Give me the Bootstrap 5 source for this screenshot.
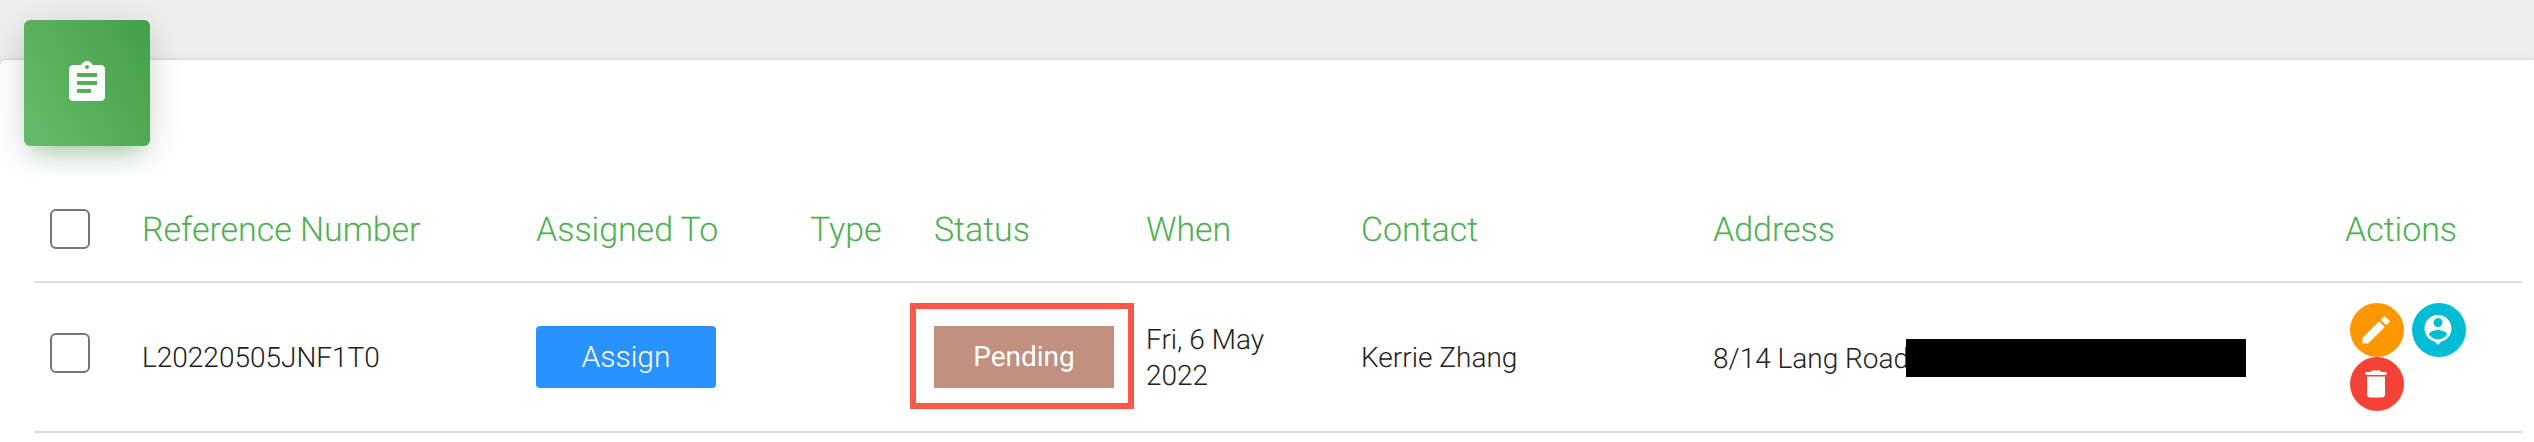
<!DOCTYPE html>
<html lang="en">
<head>
<meta charset="utf-8">
<meta name="viewport" content="width=device-width, initial-scale=1">
<title>Jobs</title>
<link rel="stylesheet" href="https://cdn.jsdelivr.net/npm/bootstrap@5.3.0/dist/css/bootstrap.min.css">
<style>
  body { background: #eee; font-family: Roboto, "Liberation Sans", sans-serif; font-weight: 300; font-size: 28px; line-height: 36px; color: #212121; overflow: hidden; text-rendering: geometricPrecision; }
  .job-card { margin-top: 60px; height: 400px; border-radius: 6px 0 0 0; box-shadow: 0 2px 8px rgba(0,0,0,.14), 0 0 3px rgba(0,0,0,.08); }
  .job-head { height: 116px; padding-left: 24px; }
  .job-icon { width: 126px; height: 126px; margin-top: -40px; border-radius: 6px; background: linear-gradient(60deg, #66bb6a, #43a047); box-shadow: 0 8px 40px rgba(0,0,0,.14), 0 14px 20px -10px rgba(76,175,80,.4); }
  .job-wrap { margin: 0 12px 0 34px; z-index: 1; }
  .job-table { table-layout: fixed; width: 2488px; --bs-table-bg: #fff; --bs-table-color: #212121; }
  .job-table > :not(caption) > * > * { padding: 0 16px; border-bottom: 2px solid #dcdcdc; vertical-align: middle; box-shadow: none; }
  .job-table thead th { height: 106px; font-size: 34px; font-weight: 300; color: #4caf50; white-space: nowrap; line-height: 50px; letter-spacing: -.05px; }
  .job-table thead th.head-text { padding-top: 2px; }
  .job-table tbody td { height: 150px; }
  .job-table tbody td.cell-text { padding-top: 2px; }
  .job-check.form-check-input { width: 40px; height: 40px; margin: 0; border: 2px solid #767676; border-radius: 6px; display: block; }
  tbody .job-check.form-check-input { margin-bottom: 8px; }
  .tag { width: 180px; height: 62px; }
  .tag-assign { background: #2a92ff; color: #fff; border: 0; border-radius: 4px; font-weight: 300; font-size: 30px; padding: 0; line-height: 62px; }
  .tag-pending { background: #c1907e; color: #fff; font-weight: 400; }
  .marker { left: -24px; top: -23px; width: 224px; height: 106px; border: 6px solid #ff584a; }
  .addr { padding-top: 2px; }
  .redact { left: 193px; top: 0; width: 340px; height: 38px; background: #000; }
  .acts { padding-left: 5px; column-gap: 8px; }
  .act { width: 54px; height: 54px; border: 0; border-radius: 50%; padding: 0 2px 0 0; }
  .act-edit { background: #ff9800; } .act-who { background: #00bcd4; } .act-del { background: #f44336; }
</style>
</head>
<body>
<main class="card job-card border-0">
  <div class="job-head">
    <div class="job-icon d-flex align-items-center justify-content-center">
      <svg width="48" height="48" viewBox="0 0 24 24" fill="#fff"><path d="M19 3h-4.180C14.400 1.840 13.300 1 12 1c-1.300 0-2.400.84-2.820 2H5c-1.100 0-2 .9-2 2v14c0 1.100.9 2 2 2h14c1.100 0 2-.9 2-2V5c0-1.100-.9-2-2-2zm-7 0c.55 0 1 .45 1 1s-.45 1-1 1-1-.45-1-1 .45-1 1-1zm2 14H7v-2h7v2zm3-4H7v-2h10v2zm0-4H7V7h10v2z"/></svg>
    </div>
  </div>
  <div class="job-wrap position-relative">
    <table class="table job-table mb-0">
      <colgroup><col style="width:92px"><col style="width:394px"><col style="width:274px"><col style="width:124px"><col style="width:212px"><col style="width:215px"><col style="width:352px"><col style="width:632px"><col style="width:193px"></colgroup>
      <thead>
        <tr>
          <th><input class="form-check-input job-check" type="checkbox" aria-label="Select all"></th>
          <th class="head-text">Reference Number</th><th class="head-text">Assigned To</th><th class="head-text">Type</th><th class="head-text">Status</th><th class="head-text">When</th><th class="head-text">Contact</th><th class="head-text">Address</th><th class="head-text">Actions</th>
        </tr>
      </thead>
      <tbody>
        <tr>
          <td><input class="form-check-input job-check" type="checkbox" aria-label="Select job"></td>
          <td class="cell-text">L20220505JNF1T0</td>
          <td><button class="btn tag tag-assign d-block" type="button">Assign</button></td>
          <td></td>
          <td><div class="tag tag-pending position-relative d-flex align-items-center justify-content-center">Pending<span class="marker position-absolute"></span></div></td>
          <td class="cell-text">Fri, 6 May<br>2022</td>
          <td class="cell-text">Kerrie Zhang</td>
          <td class="cell-text"><div class="addr position-relative">8/14 Lang Road<span class="redact position-absolute"></span></div></td>
          <td>
            <div class="acts d-flex flex-wrap">
              <button class="btn act act-edit d-flex align-items-center justify-content-center" type="button" aria-label="Edit"><svg width="36" height="36" viewBox="0 0 24 24" fill="#fff"><path d="M3 17.250V21h3.750L17.810 9.940l-3.750-3.750L3 17.250zM20.710 7.040c.39-.39.39-1.020 0-1.410l-2.340-2.340c-.39-.39-1.020-.39-1.410 0l-1.830 1.830 3.750 3.750 1.830-1.830z"/></svg></button>
              <button class="btn act act-who d-flex align-items-center justify-content-center" type="button" aria-label="Contact"><svg width="36" height="36" viewBox="0 0 24 24" fill="#fff"><path d="M12 2c-4.970 0-9 4.030-9 9 0 4.170 2.840 7.670 6.690 8.690L12 22l2.310-2.310C18.160 18.670 21 15.170 21 11c0-4.970-4.030-9-9-9zm0 2c1.660 0 3 1.340 3 3s-1.340 3-3 3-3-1.340-3-3 1.340-3 3-3zm0 14.300c-2.500 0-4.710-1.280-6-3.220.03-1.990 4-3.080 6-3.080 1.990 0 5.970 1.090 6 3.080-1.290 1.940-3.500 3.220-6 3.220z"/></svg></button>
              <button class="btn act act-del d-flex align-items-center justify-content-center" type="button" aria-label="Delete"><svg width="36" height="36" viewBox="0 0 24 24" fill="#fff"><path d="M6 19c0 1.100.9 2 2 2h8c1.100 0 2-.9 2-2V7H6v12zM19 4h-3.500l-1-1h-5l-1 1H5v2h14V4z"/></svg></button>
            </div>
          </td>
        </tr>
      </tbody>
    </table>
  </div>
</main>
<script src="https://cdn.jsdelivr.net/npm/bootstrap@5.3.0/dist/js/bootstrap.bundle.min.js"></script>
</body>
</html>
